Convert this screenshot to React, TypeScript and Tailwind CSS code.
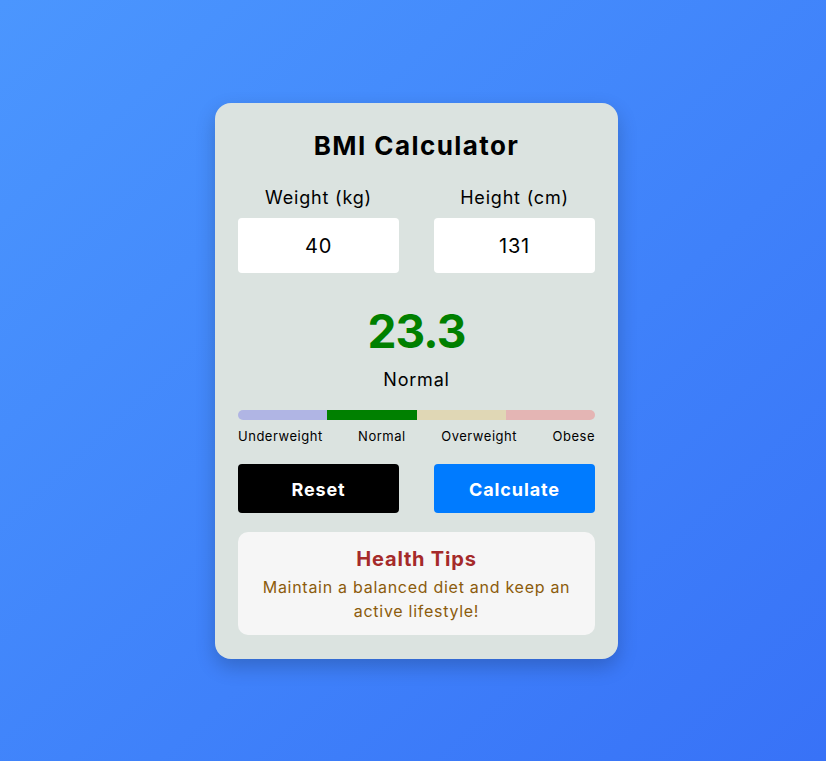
import React from "react";

export default function App() {
  return (
    <div
      className="min-h-[761px] w-full flex items-center justify-center pl-[7px] bg-gradient-to-br from-[#4b96fe] to-[#3872f7] tracking-[0.05em]"
      style={{ fontFamily: "Inter, 'Noto Sans', sans-serif" }}
    >
      <div className="w-[403px] rounded-[16px] bg-[#dbe3e0] px-[23px] pt-[23px] pb-[24px] shadow-[0_8px_20px_rgba(0,0,0,0.2)]">
        <h1 className="text-center text-[26px] font-bold leading-[40px] tracking-[0.055em] text-black">BMI Calculator</h1>

        <div className="mt-[18px] grid grid-cols-2 gap-[35px]">
          <div className="flex flex-col">
            <label className="text-center text-[18px] leading-[28px] text-black">Weight (kg)</label>
            <div className="mt-[6px] h-[55px] rounded-[4px] bg-white flex items-center justify-center pt-[2px] text-[20px] text-black">40</div>
          </div>
          <div className="flex flex-col">
            <label className="text-center text-[18px] leading-[28px] text-black">Height (cm)</label>
            <div className="mt-[6px] h-[55px] rounded-[4px] bg-white flex items-center justify-center pt-[2px] text-[20px] text-black">131</div>
          </div>
        </div>

        <div className="mt-[30px] text-center text-[46px] font-bold leading-[56px] tracking-[-0.02em] text-[#008000]">23.3</div>
        <div className="mt-[7px] text-center text-[18px] leading-[28px] text-black">Normal</div>

        <div className="mt-[16px] flex h-[10px] overflow-hidden rounded-full">
          <div className="flex-1 bg-[#b0b5e4]" />
          <div className="flex-1 bg-[#008000]" />
          <div className="flex-1 bg-[#e0d7b5]" />
          <div className="flex-1 bg-[#e4b5b4]" />
        </div>
        <div className="mt-[7px] flex justify-between text-[13px] leading-[18px] tracking-[0.04em] text-black">
          <span>Underweight</span>
          <span>Normal</span>
          <span>Overweight</span>
          <span>Obese</span>
        </div>

        <div className="mt-[19px] grid grid-cols-2 gap-[35px]">
          <button className="h-[49px] rounded-[4px] bg-black pt-[2px] text-[18px] font-bold tracking-[0.05em] text-white">Reset</button>
          <button className="h-[49px] rounded-[4px] bg-[#007bff] pt-[2px] text-[18px] font-bold tracking-[0.05em] text-white">Calculate</button>
        </div>

        <div className="mt-[19px] rounded-[10px] bg-[#f6f6f6] px-[16px] pt-[13px] pb-[12px] text-center">
          <div className="text-[20px] font-bold leading-[28px] tracking-[0.04em] text-[#a52a2a]">Health Tips</div>
          <p className="mt-[2px] text-[16px] leading-[24px] tracking-[0.045em] text-[#8c5c0c]">
            Maintain a balanced diet and keep an active lifestyle!
          </p>
        </div>
      </div>
    </div>
  );
}
